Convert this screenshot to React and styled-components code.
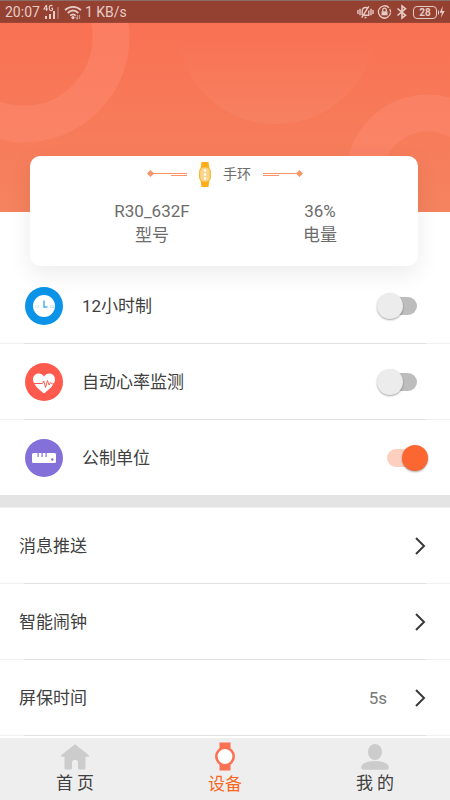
import React, { useState } from 'react';
import styled, { createGlobalStyle } from 'styled-components';

const GlobalStyle = createGlobalStyle`
    * {
        box-sizing: border-box;
    }
    body {
        margin: 0;
        background: #fff;
        color: #404040;
        font-family: Roboto, 'Noto Sans CJK SC', sans-serif;
        font-size: 17px;
        line-height: 24px;
    }
`;

//=-=-=-=-=-=-=-= LAYOUT =-=-=-=-=-=-=-=
const Screen = styled.div`
    display: flex;
    flex-direction: column;
    min-height: 100vh;
`;

const StatusBar = styled.div`
    display: flex;
    justify-content: space-between;
    align-items: center;
    height: 23px;
    padding: 0 5px;
    border-top: 1px solid #8a6f68;
    border-bottom: 1px solid #a04837;
    background: #944132;
    color: #e6cbc5;
    font-size: 14px;
    line-height: 20px;
`;

const StatusGroup = styled.div`
    display: flex;
    align-items: center;
    gap: 3px;
`;

const Hero = styled.header`
    position: relative;
    padding: 133px 32px 2px 30px;
    background: linear-gradient(#f97153, #f5835f) top / 100% 189px no-repeat;
`;

const HeroArt = styled.svg`
    position: absolute;
    top: 0;
    left: 0;
    width: 100%;
    height: 189px;
`;

const Card = styled.section`
    position: relative;
    height: 110px;
    border-radius: 10px;
    background: #fff;
    box-shadow: 0 8px 24px rgba(0, 0, 0, .08);
`;

const CardTitle = styled.h1`
    display: flex;
    justify-content: center;
    align-items: center;
    gap: 12px;
    height: 36px;
    margin: 0;
    padding-left: 2px;
    color: #6c6c6c;
    font-size: 14px;
    font-weight: normal;
`;

const Facts = styled.dl`
    display: grid;
    grid-template-columns: 1fr 1fr;
    margin: 0;
    padding: 7px 14px 0 38px;
    color: #6c6c6c;
    text-align: center;
`;

const Fact = styled.div`
    display: flex;
    flex-direction: column-reverse;
`;

const FactValue = styled.dd`
    margin: 0;
`;

//=-=-=-=-=-=-=-= ROWS =-=-=-=-=-=-=-=
const List = styled.ul`
    margin: 0;
    padding: 0;
    list-style: none;
`;

const Item = styled.li`
    & + & {
        border-top: 1px solid;
        border-image: linear-gradient(90deg, #f1f1f1 25px, #e2e2e2 25px, #e2e2e2 calc(100% - 25px), #f1f1f1 calc(100% - 25px)) 1;
    }
`;

const SettingRow = styled.div`
    display: flex;
    align-items: center;
    gap: 19px;
    height: 75px;
    padding: 0 22px 0 25px;
`;

const SettingLabel = styled.label`
    flex: 1;
`;

const Badge = styled.svg`
    width: 38px;
    height: 38px;
    border-radius: 50%;
    background: ${(props) => props.$color};
`;

const Switch = styled.input`
    appearance: none;
    display: flex;
    align-items: center;
    width: 51px;
    height: 26px;
    margin: 0;
    padding: 0 10px;
    cursor: pointer;

    &::before {
        content: '';
        width: 30px;
        height: 18px;
        flex: none;
        border-radius: 9px;
        background: ${(props) => (props.checked ? '#fdcfbf' : '#bdbdbd')};
    }
    &::after {
        content: '';
        width: 26px;
        height: 26px;
        flex: none;
        margin-left: ${(props) => (props.checked ? '-15px' : '-40px')};
        border-radius: 50%;
        background: ${(props) => (props.checked ? '#fc6631' : '#ececec')};
        box-shadow: 0 1px 2px rgba(0, 0, 0, .35);
    }
`;

const Band = styled.div`
    height: 13px;
    border-bottom: 1px solid #f1f1f1;
    background: #e4e4e4;
`;

const LinkRow = styled.button`
    display: flex;
    align-items: center;
    gap: 27px;
    width: 100%;
    height: 75px;
    padding: 0 24px 0 19px;
    border: 0;
    background: none;
    color: inherit;
    font: inherit;
    text-align: left;
    cursor: pointer;
`;

const LinkText = styled.span`
    flex: 1;
`;

const LinkValue = styled.span`
    color: #777;
`;

//=-=-=-=-=-=-=-= TAB BAR =-=-=-=-=-=-=-=
const TabBar = styled.nav`
    position: sticky;
    bottom: 0;
    display: grid;
    grid-template-columns: repeat(3, 1fr);
    height: 62px;
    margin-top: auto;
    background: #eee;
`;

const Tab = styled.a`
    display: flex;
    flex-direction: column;
    align-items: center;
    padding-top: 4px;
    color: ${(props) => (props.$active ? '#f8671c' : '#404040')};
    text-decoration: none;
`;

//=-=-=-=-=-=-=-= ICONS =-=-=-=-=-=-=-=
const SignalIcon = () => (
    <svg width="18" height="16" viewBox="0 0 18 16" fill="currentColor">
        <path d="M3.4 1L1 5h4M3.6 1v6M9.4 2.2C8.2.6 6.2 1.4 6.2 4S8.400 7.200 9.500 6V4.200H8" fill="none" stroke="currentColor" strokeWidth="1.1" />
        <rect x="2" y="12" width="2" height="3" />
        <rect x="6" y="10" width="2" height="5" />
        <rect x="10" y="7" width="2" height="8" />
        <rect x="14" y="3" width="2" height="12" opacity=".3" />
    </svg>
);

const WifiIcon = () => (
    <svg width="18" height="16" viewBox="0 0 18 16" fill="none" stroke="currentColor" strokeWidth="1.8">
        <path d="M1 6.2C5.5 1.8 12.5 1.8 17 6.2M3.7 9C7 5.9 11 5.9 14.3 9M6.2 11.6C8 10 10 10 11.8 11.6" />
        <path d="M9 11.5l2 2.200-2 1.800-2-1.800z" fill="currentColor" stroke="none" />
        <path d="M13.500 15.500l-2-2.500M13.500 15.500V11M15.500 11v4" strokeWidth="1.2" opacity=".6" />
    </svg>
);

const VibrateIcon = () => (
    <svg width="17" height="16" viewBox="0 0 18 16" fill="none" stroke="currentColor" strokeWidth="1.5">
        <path d="M1 6v4M3.2 4.5v7M14.8 4.5v7M17 6v4M5.500 11.500V7.500C5.500 4.800 7 3.200 9 3.200c1.200 0 2 .4 2.600 1.200M12.500 6.500v5H7.500M5 14L12.500 2M8 13.800h2" />
    </svg>
);

const RotateLockIcon = () => (
    <svg width="15" height="16" viewBox="0 0 15 16" fill="none" stroke="currentColor" strokeWidth="1.3">
        <path d="M12 3.7A6.1 6.1 0 1 0 13.6 8.500M12.6 5a6 6 0 0 1 1 3M3.5 12.600A6 6 0 0 0 11 13" />
        <path d="M5.700 7.500V6a1.800 1.800 0 0 1 3.600 0v1.500" />
        <rect x="4.500" y="7.300" width="6" height="4" fill="currentColor" stroke="none" />
    </svg>
);

const BluetoothIcon = () => (
    <svg width="14" height="16" viewBox="0 0 14 16" fill="none" stroke="currentColor" strokeWidth="1.6">
        <path d="M2.500 4.500l8 6.800L7 14V2l3.500 2.700-8 6.800" />
    </svg>
);

const BatteryIcon = () => (
    <svg width="33" height="16" viewBox="0 0 33 16" fill="none" stroke="currentColor">
        <rect x="1.5" y="2.5" width="23" height="12" rx="3.5" />
        <path d="M26.5 6.500v4" />
        <text x="13" y="12" fill="currentColor" stroke="none" fontSize="10" fontWeight="bold" textAnchor="middle">28</text>
        <path d="M30.800 2L27.600 8.700h2.300L28.800 14l3.900-7h-2.500z" fill="currentColor" stroke="none" />
    </svg>
);

const Flourish = ({ flip }) => (
    <svg width="40" height="8" viewBox="0 0 40 8">
        <g transform={flip ? 'translate(40 0) scale(-1 1)' : undefined} fill="#fb9468">
            <path d="M3.500 0L7 3.500 3.500 7 0 3.500z" />
            <rect x="6" y="3" width="34" height="1" />
            <rect x="24" y="5" width="16" height="1" />
        </g>
    </svg>
);

const BandIcon = () => (
    <svg width="12" height="25" viewBox="0 0 12 25">
        <path d="M2.5 0h7l.8 6v13l-.8 6h-7l-.8-6V6z" fill="#fdae17" />
        <rect x="0" y="5" width="12" height="15" rx="5" fill="#fdb730" />
        <rect x="1.2" y="5.5" width="9.6" height="14" rx="4.5" fill="#f7d68c" />
        <g fill="#fff">
            <circle cx="6" cy="8.5" r="1.3" />
            <circle cx="6" cy="12.5" r="1.3" />
            <circle cx="6" cy="16.5" r="1.3" />
        </g>
    </svg>
);

const ClockBadge = () => (
    <Badge $color="#0b93e8" viewBox="0 0 38 38">
        <circle cx="19" cy="19" r="11" fill="#fff" />
        <path d="M19 13.5V20h3.5" fill="none" stroke="#4db0ee" strokeWidth="1.5" />
        <g fill="#8fcdf4" fontSize="4" textAnchor="middle">
            <text x="11.5" y="20.5">12</text>
            <text x="26.5" y="20.5">24</text>
        </g>
    </Badge>
);

const HeartBadge = () => (
    <Badge $color="#ff5a4e" viewBox="0 0 38 38">
        <path d="M19 30.5C14 26.5 8 21.5 8 16.5 8 13 10.5 10.6 13.5 10.6c2.4 0 4.3 1.2 5.5 3.2 1.2-2 3.1-3.2 5.5-3.2 3 0 5.5 2.4 5.5 5.9 0 5-6 10-11 14z" fill="#fff" />
        <path d="M8.500 20.500h9l1.300-2.500 1.700 6.500 2-7 1.600 4.500 1.600-2.500 1.500 1.500h2" fill="none" stroke="#ff5a4e" strokeWidth="1" />
    </Badge>
);

const RulerBadge = () => (
    <Badge $color="#8370d8" viewBox="0 0 38 38">
        <rect x="7" y="14" width="24" height="10" rx="1.5" fill="#fff" />
        <g fill="#8370d8">
            <rect x="12.500" y="14" width="1.2" height="4" />
            <rect x="16.500" y="14" width="1.2" height="4" />
            <rect x="20.500" y="14" width="1.2" height="4" />
            <circle cx="27.300" cy="20.500" r="1.2" />
        </g>
    </Badge>
);

const Chevron = () => (
    <svg width="12" height="20" viewBox="0 0 12 20" fill="none" stroke="#3a3a3a" strokeWidth="2">
        <path d="M2 2l8 8-8 8" />
    </svg>
);

const HomeIcon = () => (
    <svg width="30" height="29" viewBox="0 0 30 29" fill="#ccc">
        <path d="M15 2.200L28.600 13c.8.800.3 1.800-.8 1.800h-2.300V26c0 .9-.6 1.500-1.500 1.500h-4.500c-.8 0-1.500-.6-1.500-1.500v-5.500c0-1.700-1.300-2.700-3-2.700s-3 1-3 2.700V26c0 .9-.7 1.500-1.500 1.500H6c-.9 0-1.500-.6-1.500-1.500V14.800H2.200c-1.100 0-1.600-1-.8-1.800z" />
    </svg>
);

const WatchIcon = () => (
    <svg width="20" height="30" viewBox="0 0 20 30">
        <path d="M4.500.5h11V8h-11zM4.500 21h11v7.500h-11z" fill="#fb7153" />
        <circle cx="10" cy="14.500" r="8.700" fill="#fff" stroke="#fb7153" strokeWidth="2.600" />
    </svg>
);

const UserIcon = () => (
    <svg width="30" height="29" viewBox="0 0 30 29" fill="#ccc">
        <ellipse cx="15" cy="10" rx="7" ry="8" />
        <path d="M15 19c7 0 13.800 2 13.800 6.500 0 1.500-.8 2.200-2.300 2.200h-23c-1.500 0-2.300-.7-2.300-2.200C1.200 21 8 19 15 19z" />
    </svg>
);

//=-=-=-=-=-=-=-= DATA =-=-=-=-=-=-=-=
const settings = [
    { id: 'hour12', label: '12小时制', icon: ClockBadge },
    { id: 'heart', label: '自动心率监测', icon: HeartBadge },
    { id: 'metric', label: '公制单位', icon: RulerBadge },
];

const links = [
    { label: '消息推送' },
    { label: '智能闹钟' },
    { label: '屏保时间', value: '5s' },
];

const tabs = [
    { label: '首 页', href: '#home', icon: HomeIcon },
    { label: '设备', href: '#device', icon: WatchIcon, active: true },
    { label: '我 的', href: '#me', icon: UserIcon },
];

function App() {
    const [on, setOn] = useState({ hour12: false, heart: false, metric: true });

    const toggle = (id) => setOn({ ...on, [id]: !on[id] });

    return (
        <Screen>
            <GlobalStyle />
            <StatusBar>
                <StatusGroup>
                    <span>20:07</span>
                    <SignalIcon />
                    <WifiIcon />
                    <span>1 KB/s</span>
                </StatusGroup>
                <StatusGroup>
                    <VibrateIcon />
                    <RotateLockIcon />
                    <BluetoothIcon />
                    <BatteryIcon />
                </StatusGroup>
            </StatusBar>

            <Hero>
                <HeroArt viewBox="0 0 450 189" preserveAspectRatio="xMidYMin slice">
                    <defs>
                        <linearGradient id="fade" x1="0" y1="0" x2="0" y2="1">
                            <stop offset=".55" stopColor="#fff" stopOpacity="0" />
                            <stop offset="1" stopColor="#fff" stopOpacity=".05" />
                        </linearGradient>
                    </defs>
                    <circle cx="276" cy="1" r="100" fill="url(#fade)" />
                    <circle cx="24" cy="14" r="87" fill="none" stroke="#ff8c74" strokeOpacity=".45" strokeWidth="37" />
                    <circle cx="428" cy="154" r="64" fill="none" stroke="#ff8c74" strokeOpacity=".45" strokeWidth="37" />
                </HeroArt>
                <Card>
                    <CardTitle>
                        <Flourish />
                        <BandIcon />
                        手环
                        <Flourish flip />
                    </CardTitle>
                    <Facts>
                        <Fact>
                            <dt>型号</dt>
                            <FactValue>R30_632F</FactValue>
                        </Fact>
                        <Fact>
                            <dt>电量</dt>
                            <FactValue>36%</FactValue>
                        </Fact>
                    </Facts>
                </Card>
            </Hero>

            <List>
                {settings.map(({ id, label, icon: Icon }) => (
                    <Item key={id}>
                        <SettingRow>
                            <Icon />
                            <SettingLabel htmlFor={id}>{label}</SettingLabel>
                            <Switch id={id} type="checkbox" role="switch" checked={on[id]} onChange={() => toggle(id)} />
                        </SettingRow>
                    </Item>
                ))}
            </List>

            <Band />

            <List>
                {links.map(({ label, value }) => (
                    <Item key={label}>
                        <LinkRow type="button">
                            <LinkText>{label}</LinkText>
                            {value && <LinkValue>{value}</LinkValue>}
                            <Chevron />
                        </LinkRow>
                    </Item>
                ))}
                <Item />
            </List>

            <TabBar>
                {tabs.map(({ label, href, icon: Icon, active }) => (
                    <Tab key={href} href={href} $active={active} aria-current={active ? 'page' : undefined}>
                        <Icon />
                        {label}
                    </Tab>
                ))}
            </TabBar>
        </Screen>
    );
}

export default App;
